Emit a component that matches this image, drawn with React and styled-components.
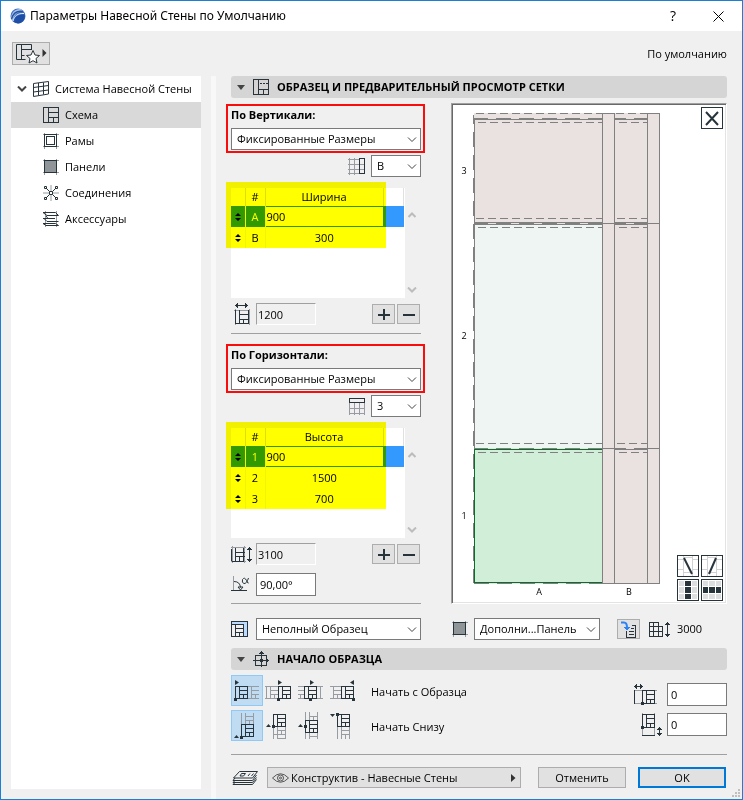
import * as React from "react";
import styled, { createGlobalStyle, css } from "styled-components";

const INK = "#27343c";
const PALE = "#969ca1";

const GlobalStyle = createGlobalStyle`
  * {
    box-sizing: border-box;
  }
  body {
    margin: 0;
    background: #f0f0f0;
  }
  body, button, input, select {
    font-family: "Open Sans", "Noto Sans", sans-serif;
    font-size: 11px;
    line-height: 16px;
    color: #000;
  }
  button, input, select {
    margin: 0;
    border-radius: 0;
    outline: none;
  }
`;

const Dialog = styled.div`
  display: flex;
  flex-direction: column;
  min-height: 100vh;
  border: 1px solid #1a80d6;
  background: #f0f0f0;
`;

const TitleBar = styled.header`
  display: flex;
  align-items: center;
  height: 30px;
  padding: 0 9px;
  background: #fff;
`;

const Title = styled.h1`
  flex: 1;
  margin: 0 0 0 4px;
  font-family: "Noto Sans", "Open Sans", sans-serif;
  font-size: 12px;
  font-weight: 400;
`;

const TitleButton = styled.button`
  display: flex;
  align-items: center;
  justify-content: center;
  width: 30px;
  height: 24px;
  margin-left: 15px;
  padding: 0;
  border: 0;
  background: none;
  font-size: 14px;
`;

const TopStrip = styled.div`
  display: flex;
  align-items: center;
  justify-content: space-between;
  height: 45px;
  padding: 0 15px 0 11px;
`;

const FlatButton = styled.button`
  display: flex;
  align-items: center;
  justify-content: center;
  width: ${(p) => p.$w || 23}px;
  height: ${(p) => p.$h || 20}px;
  padding: 0;
  border: 1px solid #adadad;
  background: #e1e1e1;
`;

const Body = styled.div`
  display: flex;
  flex: 1;
`;

const Sidebar = styled.nav`
  width: 190px;
  margin: 0 10px 10px;
  background: #fff;
`;

const NavItem = styled.a`
  display: flex;
  align-items: center;
  gap: 6px;
  height: 26px;
  padding-left: ${(p) => (p.$root ? 6 : 32)}px;
  background: ${(p) => (p.$active ? "#d9d9d9" : "none")};
  color: #000;
  text-decoration: none;
  white-space: nowrap;
`;

const Splitter = styled.div`
  width: 5px;
  background: #f8f8f8;
`;

const Content = styled.main`
  display: flex;
  flex: 1;
  flex-direction: column;
  min-width: 0;
  padding: 0 15px 10px;
`;

const SectionHead = styled.h2`
  display: flex;
  align-items: center;
  gap: 8px;
  height: 22px;
  margin: ${(p) => p.$top || 0}px 0 0;
  padding-left: 5px;
  border-radius: 3px;
  background: #d5d5d5;
  font-size: 11px;
  font-weight: 700;
`;

const Columns = styled.div`
  display: flex;
  gap: 30px;
  padding-top: 5px;
`;

const Settings = styled.div`
  display: flex;
  flex-direction: column;
  width: 190px;
  padding-top: 4px;
`;

const Marked = styled.div`
  position: relative;
  display: flex;
  flex-direction: column;
  gap: 5px;

  &::after {
    content: "";
    position: absolute;
    inset: -3px -4px -3px -5px;
    border: 2px solid #f80c0c;
    pointer-events: none;
  }
`;

const GroupLabel = styled.label`
  font-weight: 700;
`;

const SelectBox = styled.div`
  position: relative;
  display: flex;
  width: ${(p) => (p.$w ? `${p.$w}px` : "auto")};

  svg {
    position: absolute;
    top: 9px;
    right: 4px;
    pointer-events: none;
  }
`;

const NativeSelect = styled.select`
  flex: 1;
  width: 100%;
  height: 22px;
  padding: 0 16px 0 5px;
  border: 1px solid #7a7a7a;
  background: #fff;
  appearance: none;
`;

const PickRow = styled.div`
  display: flex;
  align-items: center;
  justify-content: flex-end;
  gap: 6px;
  margin-top: 5px;
`;

const TableArea = styled.div`
  position: relative;
  display: flex;
  gap: 2px;
  height: 110px;
  margin-top: 11px;

  &::after {
    content: "";
    position: absolute;
    top: -6px;
    left: -5px;
    width: 160px;
    height: ${(p) => 24 + p.$rows * 21}px;
    background: #ff0;
    mix-blend-mode: multiply;
    pointer-events: none;
  }
`;

const TablePane = styled.div`
  width: 174px;
  background: #fff;
`;

const SizeTable = styled.table`
  width: 173px;
  border-collapse: collapse;
  table-layout: fixed;
  text-align: center;

  th {
    height: 18px;
    padding: 0;
    border-right: 1px solid #e0e0e0;
    font-weight: 400;
  }
  td {
    height: 21px;
    padding: 0;
    border-right: 1px solid #f4f4f4;
  }
  td:last-child,
  td:nth-child(3) {
    border-right: 0;
  }
`;

const HandleCol = styled.col`
  width: 14px;
`;

const NameCol = styled.col`
  width: 20px;
`;

const SizeCol = styled.col`
  width: 118px;
`;

const SizeRow = styled.tr`
  ${(p) =>
    p.$selected &&
    css`
      background: #3399ff;
      color: #fff;
    `}
  svg {
    display: block;
    margin: 0 auto;
  }
`;

const CellInput = styled.input`
  display: block;
  width: 100%;
  height: 19px;
  padding: 0 1px;
  border: 0;
  background: #fff;
`;

const ScrollArrows = styled.div`
  display: flex;
  flex-direction: column;
  justify-content: space-between;
  padding: 24px 0 5px;
`;

const FieldRow = styled.div`
  display: flex;
  align-items: center;
  height: ${(p) => p.$h || 22}px;
  margin-top: ${(p) => p.$top || 5}px;
`;

const IconSlot = styled.label`
  display: flex;
  width: 25px;
`;

const TextInput = styled.input`
  width: 60px;
  height: 23px;
  padding: 0 3px;
  border: 1px solid #7a7a7a;
  background: #fff;
`;

const TotalInput = styled.input`
  width: 60px;
  height: 22px;
  padding: 0 1px;
  border: 1px solid;
  border-color: #a0a0a0 #fff #fff #a0a0a0;
  background: #f0f0f0;
`;

const StepButtons = styled.div`
  display: flex;
  gap: 2px;
  margin: 0 1px 0 auto;
`;

const Rule = styled.hr`
  width: 100%;
  height: 1px;
  margin: ${(p) => p.$m};
  border: 0;
  background: #a0a0a0;
`;

const Preview = styled.div`
  position: relative;
  flex: 1;
  border: 1px solid;
  border-color: #a0a0a0 #fff #fff #a0a0a0;
  background: #fff;
  box-shadow: inset 1px 1px #696969, inset -1px -1px #e3e3e3;

  > svg {
    display: block;
    margin: 1px;
  }
`;

const CanvasTools = styled.div`
  position: absolute;
  right: 3px;
  ${(p) => (p.$top ? "top: 3px;" : "bottom: 2px;")}
  display: grid;
  grid-template-columns: repeat(${(p) => (p.$top ? 1 : 2)}, 22px);
  gap: 2px;
`;

const CanvasButton = styled.button`
  display: flex;
  height: 22px;
  padding: 0;
  border: 1px solid ${INK};
  background: #fff;
`;

const PatternRow = styled.div`
  display: flex;
  align-items: center;
  margin-top: 14px;
`;

const PanelPick = styled.div`
  display: flex;
  align-items: center;
  gap: 6px;
  margin: 0 17px 0 31px;
`;

const Height = styled.span`
  display: flex;
  align-items: center;
  gap: 6px;
  margin-left: 9px;
`;

const OriginArea = styled.div`
  display: flex;
  justify-content: space-between;
  padding-top: 5px;
`;

const OriginRows = styled.div`
  display: grid;
  gap: 4px;
`;

const OriginRow = styled.div`
  display: flex;
  align-items: center;
`;

const OriginText = styled.span`
  margin-left: 12px;
  padding-top: 2px;
`;

const OriginButton = styled.button`
  display: flex;
  width: 32px;
  height: 31px;
  padding: 0;
  border: 0;
  background: ${(p) => (p.$on ? "#c0dcf3" : "none")};
  box-shadow: ${(p) => (p.$on ? "inset 0 0 0 1px #90c8f6" : "none")};
`;

const Offsets = styled.div`
  display: grid;
  gap: 7px;
  align-content: start;
  padding-top: 8px;
`;

const OffsetField = styled.label`
  display: flex;
  align-items: center;
  gap: 4px;
  height: 23px;
`;

const Footer = styled.footer`
  display: flex;
  align-items: center;
  gap: 12px;
  padding-right: 1px;
`;

const FooterButton = styled.button`
  width: 88px;
  height: 21px;
  padding: 0;
  border: ${(p) => (p.$primary ? "2px solid #0078d7" : "1px solid #adadad")};
  background: #e1e1e1;
  line-height: 17px;
`;

const LayerButton = styled.button`
  display: flex;
  flex: 1;
  align-items: center;
  gap: 2px;
  height: 21px;
  margin-right: 5px;
  margin-left: -4px;
  padding: 0 4px;
  border: 1px solid #adadad;
  background: #e1e1e1;

  svg:last-child {
    margin-left: auto;
  }
`;

const Grip = styled.svg`
  position: fixed;
  right: 3px;
  bottom: 3px;
`;

const IconSvg = styled.svg`
  flex: none;
`;

/* icons */

const Icon = ({ w = 16, h = w, dark, pale, fill, children }) => (
  <IconSvg width={w} height={h} viewBox={`0 0 ${w} ${h}`} fill="none" shapeRendering="crispEdges" aria-hidden="true">
    {pale && <path d={pale} stroke={PALE} />}
    {dark && <path d={dark} stroke={INK} />}
    {fill && <path d={fill} fill={INK} />}
    {children}
  </IconSvg>
);

const Chevron = ({ color = "#444", up, w = 1 }) => (
  <svg width="10" height="6" viewBox="0 0 10 6" fill="none" stroke={color} strokeWidth={w} aria-hidden="true">
    <path d={up ? "M1.5 5L5 1.5L8.5 5" : "M1 .5L5 4.5L9 .5"} />
  </svg>
);

const Logo = () => (
  <svg width="16" height="16" viewBox="0 0 16 16" aria-hidden="true">
    <circle cx="8" cy="8" r="7.5" fill="#3f6fc4" />
    <path d="M1 11C1 4 6 .5 11 1.2L14 3.5C8 3 4 6 2.5 13Z" fill="#a9c3ea" />
    <path d="M4 14C4 9 8 6 14.5 6.5C16 11 12 15.5 8 15.5Z" fill="#1f4ea6" />
    <path d="M1.5 11C3 5.5 7 2.5 13 3.5" stroke="#28549f" strokeWidth="1.5" fill="none" />
    <path d="M3 13C4 8 8 5 14 5.5" stroke="#e7f0fc" fill="none" />
  </svg>
);

const SchemeIcon = () => <Icon dark="M.5 .5h15v15h-15zM5.5 .5v15M5.5 5.5h10M5.5 10.5h10M10.5 10.5v5" />;

const SystemIcon = () => (
  <svg width="16" height="16" viewBox="0 0 16 16" fill="none" stroke={INK} aria-hidden="true">
    <path d="M.5 2.5L15.5 .5V13L.5 15.5zM5.5 2v12.5M10.5 1.5v12M.5 6.5L15.5 4.5M.5 11L15.5 9" />
  </svg>
);

const FramesIcon = () => (
  <Icon pale="M1.5 0v16M13.5 0v16M0 1.5h16M0 13.5h16">
    <path d="M1.5 1.5h12v12h-12z" fill="#fff" stroke={INK} />
    <path d="M3.5 3.5h8v8h-8z" stroke={INK} />
  </Icon>
);

const PanelIcon = () => (
  <Icon pale="M1.5 0v16M13.5 0v16M0 1.5h16M0 13.5h16">
    <path d="M1.5 1.5h12v12h-12z" fill="#8f9599" stroke={INK} />
  </Icon>
);

const JointsIcon = () => (
  <svg width="16" height="16" viewBox="0 0 16 16" fill="none" stroke={INK} aria-hidden="true">
    <path d="M8 0v6M8 10v6M0 8h6M10 8h6" stroke={PALE} />
    <path d="M3 3l3.5 3.5M13 3L9.5 6.5M3 13l3.5-3.5M13 13L9.5 9.5M6.5 6.5h3v3h-3z" />
    <path d="M1.5 1.5h2v2h-2zM12.5 1.5h2v2h-2zM1.5 12.5h2v2h-2zM12.5 12.5h2v2h-2z" />
  </svg>
);

const AccessoriesIcon = () => (
  <svg width="16" height="16" viewBox="0 0 16 16" fill="none" stroke={INK} aria-hidden="true">
    <path d="M2.5 0v16M13.5 0v16" stroke={PALE} />
    <path d="M0 1.5h12.5L15.5 4.5H4zM0 7.5h12M3 5l2 2.5M15.5 10.5H4L1 7.5M0 12.5h12.5l3 2H3z" />
  </svg>
);

const GridIcon = ({ row }) => (
  <Icon
    w={17}
    pale={
      row
        ? "M1.5 5v12M6.5 5v12M11.5 5v12M16.5 5v12M1 10.5h16M1 15.5h16"
        : "M1.5 0v17M6.5 0v17M0 1.5h12M0 6.5h16M0 11.5h16M0 15.5h12"
    }
    dark={row ? "M1.5 .5h15v4h-15z" : "M11.5 .5h5v15h-5z"}
  />
);

const SpanIcon = ({ tall }) =>
  tall ? (
    <Icon
      w={22}
      h={17}
      pale="M0 1.5h15M0 15.5h15M1.5 0v17M13.5 0v17"
      dark="M.5 2.5v12M4.5 2v13M4.5 6.5h9M4.5 10.5h9M8.5 10.5v5M1 15.5h12M12.5 2v13M18.5 3v11"
      fill="M18 1h1v1h1v1h1v1h-5v-1h1v-1h1zM16 13h5v1h-1v1h-1v1h-1v-1h-1v-1h-1z"
    />
  ) : (
    <Icon
      w={22}
      pale="M3 7.5h16M18.5 6v16M4.5 6v16"
      dark="M4.5 7v13.5h13M8.5 7v13M17.5 7v13M8.5 11.5h9M8.5 16.5h9M12.5 16.5v4M5 2.5h11"
      fill="M4 2h1v-1h1v-1h1v5h-1v-1h-1v-1h-1zM14 0h1v1h1v1h1v1h-1v1h-1v1h-1z"
    />
  );

const AngleIcon = () => (
  <svg width="19" height="17" viewBox="0 0 19 17" fill="none" stroke={INK} aria-hidden="true">
    <path d="M2.5 0v15" stroke={PALE} />
    <path d="M0 14.5h16M3 5.5q6 0 6.5 6M7 11h5l-2.5 3z" />
    <path d="M17.5 2q-2 6-4.5 5.5t-1.5-4q2-3 4 1t2 2.5" />
  </svg>
);

/* one mullion module; the pale lines are the modules that continue it */
const moduleLines = (x, y) =>
  `M${x}.5 ${y}.5h12v12h-12zM${x + 4}.5 ${y}.5v12M${x + 4}.5 ${y + 4}.5h8M${x + 4}.5 ${y + 8}.5h8M${x + 8}.5 ${y + 8}.5v4`;

const ORIGINS = {
  across: [
    { x: 4, pale: "M16 11.5h12M16 23.5h12M20.5 11v13M20 15.5h8M20 19.5h8M24.5 19v5", dot: [3, 23], tri: "M4 5l4 2.5L4 10z" },
    { x: 15, pale: "M2 11.5h13M2 23.5h13M3.5 11v13M7.5 11v13M7 15.5h8M7 19.5h8M11.5 19v5", dot: [14, 23], tri: "M15 5l4 2.5L15 10z" },
    { x: 9, pale: "M3 11.5h6M3 23.5h6M3 15.5h6M3 19.5h6M5.5 19v5M22 11.5h6M22 23.5h6M25.5 11v13", dot: [14, 23], tri: "M15 5l4 2.5L15 10z" },
    { x: 14, pale: "M3 11.5h11M3 23.5h11M6.5 11v13M6 15.5h8M6 19.5h8M10.5 19v5", dot: [25, 23], tri: "M27 5l-4 2.5L27 10z" },
  ],
  upward: [
    { y: 14, pale: "M10.5 3v11M14.5 3v11M22.5 3v11M14 6.5h8M14 10.5h8M18.5 10v4", dot: [9, 26], tri: "M3 28l2.5-3L8 28z" },
    { y: 4, pale: "M10.5 16v13M14.5 16v13M22.5 16v13M14 20.5h8M10 24.5h12M18.5 20v4M14 28.5h8", dot: [9, 15], tri: "M3 17l2.5-3L8 17z" },
    { y: 10, pale: "M10.5 22v7M14.5 2v8M14.5 22v7M22.5 2v8M22.5 22v7M10.5 2v8M14 6.5h8M18.5 6v4M14 26.5h8", dot: [9, 15], tri: "M3 17l2.5-3L8 17z" },
    { y: 4, pale: "M10.5 16v13M14.5 16v13M22.5 16v13M14 20.5h8M14 24.5h8M18.5 24v5", dot: [9, 3], tri: "M3 4l2.5 3L8 4z" },
  ],
};

const OriginIcon = ({ x = 10, y = 11, pale, dot, tri }) => (
  <Icon w={32} h={31} pale={pale} dark={moduleLines(x, y)}>
    <path d={`M${dot[0]} ${dot[1]}h3v3h-3z`} fill={INK} />
    <path d={tri} fill={INK} shapeRendering="auto" />
  </Icon>
);

const dashX = { stroke: "#808080", strokeDasharray: "8 4" };

const GridPreview = () => (
  <svg width="270" height="497" viewBox="453 105 270 497" fill="none" shapeRendering="crispEdges" role="img" aria-label="Сетка">
    <path d="M474 113h186v471H474z" fill="#eae1e1" />
    <path d="M475 225h127v223H475z" fill="#eff5f2" />
    <path d="M473.5 115v468" stroke="#808080" strokeDasharray="15 8" strokeDashoffset="6" />
    <path d="M474.5 118v465M602.5 113v471M614.5 113v471M647.5 113v471M659.5 113v471" stroke="#808080" />
    <path d="M602 113.5h12M647 113.5h13M602 583.5h58M602 223.5h58M602 448.5h58" stroke="#808080" />
    <path d="M476 113.5h126M616 113.5h31" {...dashX} />
    {[119, 223.5, 448.5].map((y, i) => (
      <React.Fragment key={y}>
        <path d={`M474 ${y}h128M614 ${y}h33`} stroke="#808080" strokeWidth={i === 1 ? 3 : 2} />
        <path d={`M488 ${i ? y : 118.5}h114M626 ${i ? y : 118.5}h9`} stroke="#eae1e1" strokeDasharray="8 15" />
      </React.Fragment>
    ))}
    <path d="M478 122.5h124M619 122.5h28M478 227.5h124M619 227.5h28" {...dashX} />
    <path d="M476 218.5h126M617 218.5h30M476 443.5h126M617 443.5h30" {...dashX} />
    <path d="M619 452.5h28" {...dashX} />
    <path d="M474.5 449.5h128v133h-128z" fill="#d1efd8" stroke="#0d6b2b" />
    <path d="M478 452.5h124" {...dashX} />
    <path d="M474 583.5h128" stroke="#808080" strokeDasharray="15 8" />
    <path d="M602.5 449v134" stroke="#808080" />
    <g fill="#000" fontSize="9" textAnchor="middle" shapeRendering="auto">
      <text x="464" y="174">3</text>
      <text x="464" y="339">2</text>
      <text x="464" y="519">1</text>
      <text x="539" y="595">A</text>
      <text x="629" y="595">B</text>
    </g>
  </svg>
);

const LineTool = ({ d }) => (
  <svg width="20" height="20" viewBox="0 0 20 20" fill="none" aria-hidden="true">
    <path d="M5.5 0v20M14.5 0v20M0 3.5h5M0 13.5h5M5 1.5h10M5 16.5h10M15 3.5h5M15 13.5h5" stroke="#d0d3d5" />
    <path d={d} stroke={INK} strokeWidth="2" />
  </svg>
);

const CELL_STARTS = [1, 7, 14];
const CELL_SIZES = [5, 6, 5];

const CellTool = ({ column }) => (
  <svg width="20" height="20" viewBox="0 0 20 20" aria-hidden="true">
    {[0, 1, 2].map((r) =>
      [0, 1, 2].map((c) => (
        <rect
          key={`${r}${c}`}
          x={CELL_STARTS[c]}
          y={CELL_STARTS[r]}
          width={CELL_SIZES[c]}
          height={CELL_SIZES[r]}
          fill={(column ? c : r) === 1 ? INK : "#dcdee0"}
        />
      ))
    )}
  </svg>
);

const Select = ({ id, label, value, w }) => (
  <SelectBox $w={w}>
    <NativeSelect id={id} aria-label={label} defaultValue={value}>
      <option>{value}</option>
    </NativeSelect>
    <Chevron />
  </SelectBox>
);

const SizePanel = ({ id, title, value, pick, heading, rows, total, tall }) => (
  <>
    <Marked>
      <GroupLabel htmlFor={id}>{title}</GroupLabel>
      <Select id={id} value={value} />
    </Marked>
    <PickRow>
      <GridIcon row={tall} />
      <Select label={heading} value={pick} w={50} />
    </PickRow>
    <TableArea $rows={rows.length}>
      <TablePane>
        <SizeTable>
          <colgroup>
            <HandleCol />
            <NameCol />
            <SizeCol />
            <col />
          </colgroup>
          <thead>
            <tr>
              <th />
              <th>#</th>
              <th>{heading}</th>
              <th />
            </tr>
          </thead>
          <tbody>
            {rows.map(([name, size], i) => (
              <SizeRow key={name} $selected={i === 0}>
                <td>
                  <svg width="6" height="8" viewBox="0 0 6 8" aria-hidden="true">
                    <path d="M0 3l3-3 3 3zM0 5l3 3 3-3z" />
                  </svg>
                </td>
                <td>{name}</td>
                <td>{i === 0 ? <CellInput aria-label={`${heading} ${name}`} defaultValue={size} /> : size}</td>
                <td />
              </SizeRow>
            ))}
          </tbody>
        </SizeTable>
      </TablePane>
      <ScrollArrows>
        <Chevron up color="#bcbcbc" w={2} />
        <Chevron color="#bcbcbc" w={2} />
      </ScrollArrows>
    </TableArea>
    <FieldRow>
      <IconSlot htmlFor={`${id}-total`} aria-label="Итого">
        <SpanIcon tall={tall} />
      </IconSlot>
      <TotalInput id={`${id}-total`} defaultValue={total} readOnly />
      <StepButtons>
        <FlatButton aria-label="Добавить">
          <Icon w={13} fill="M6 1h2v11h-2zM1 6h12v2h-12z" />
        </FlatButton>
        <FlatButton aria-label="Удалить">
          <Icon w={13} fill="M1 6h12v2h-12z" />
        </FlatButton>
      </StepButtons>
    </FieldRow>
  </>
);

const NAV = [
  ["Схема", SchemeIcon],
  ["Рамы", FramesIcon],
  ["Панели", PanelIcon],
  ["Соединения", JointsIcon],
  ["Аксессуары", AccessoriesIcon],
];

const Caret = () => (
  <svg width="9" height="5" viewBox="0 0 9 5" aria-hidden="true">
    <path d="M1 0h8L5 5z" fill="#444" />
  </svg>
);

const RightCaret = () => (
  <svg width="5" height="8" viewBox="0 0 5 8" aria-hidden="true">
    <path d="M0 0l4.5 4L0 8z" fill="#333" />
  </svg>
);

const App = () => (
  <Dialog>
    <GlobalStyle />
    <TitleBar>
      <Logo />
      <Title>Параметры Навесной Стены по Умолчанию</Title>
      <TitleButton>?</TitleButton>
      <TitleButton aria-label="Закрыть">
        <svg width="11" height="11" viewBox="0 0 11 11" stroke="#000" aria-hidden="true">
          <path d="M.5 .5l10 10M10.5 .5l-10 10" />
        </svg>
      </TitleButton>
    </TitleBar>

    <TopStrip>
      <FlatButton $w={38} $h={23} aria-label="Избранное">
        <svg width="32" height="21" viewBox="0 0 32 21" fill="none" stroke={INK} aria-hidden="true">
          <path d="M16.5 7V1.5h-15v15h9M6.5 1.5v15M6.5 6.5h10M6.5 12.5h3" />
          <path d="M18 7.5l2 4.5 4.500.5-3.500 3 1 4.500-4-2.300-4 2.300 1-4.500-3.500-3 4.500-.5z" fill="#fff" />
          <path d="M27.5 6l4 4-4 4z" fill="#333" stroke="none" />
        </svg>
      </FlatButton>
      <span>По умолчанию</span>
    </TopStrip>

    <Body>
      <Sidebar>
        <NavItem href="#system" $root>
          <Chevron color="#444" w={2} />
          <SystemIcon />
          Система Навесной Стены
        </NavItem>
        {NAV.map(([name, Glyph], i) => (
          <NavItem key={name} href={`#${i}`} $active={i === 0}>
            <Glyph />
            {name}
          </NavItem>
        ))}
      </Sidebar>
      <Splitter />

      <Content>
        <SectionHead>
          <Caret />
          <Icon dark="M.5 .5h15v15h-15zM5.5 .5v15M5.5 10.5h10M10.5 10.5v5M7 4.5h2M10 4.5h2M13 4.5h2" />
          ОБРАЗЕЦ И ПРЕДВАРИТЕЛЬНЫЙ ПРОСМОТР СЕТКИ
        </SectionHead>

        <Columns>
          <Settings>
            <SizePanel
              id="vertical"
              title="По Вертикали:"
              value="Фиксированные Размеры"
              pick="B"
              heading="Ширина"
              rows={[["A", 900], ["B", 300]]}
              total="1200"
            />
            <Rule $m="8px 0 13px" />
            <SizePanel
              id="horizontal"
              title="По Горизонтали:"
              value="Фиксированные Размеры"
              pick="3"
              heading="Высота"
              rows={[["1", 900], ["2", 1500], ["3", 700]]}
              total="3100"
              tall
            />
            <FieldRow $h={23} $top={8}>
              <IconSlot htmlFor="angle" aria-label="Угол">
                <AngleIcon />
              </IconSlot>
              <TextInput id="angle" defaultValue="90,00°" />
            </FieldRow>
            <Rule $m="7px 0 0" />
          </Settings>

          <Preview>
            <GridPreview />
            <CanvasTools $top>
              <CanvasButton aria-label="Закрыть просмотр">
                <svg width="20" height="20" viewBox="0 0 20 20" stroke={INK} strokeWidth="2" aria-hidden="true">
                  <path d="M4 4l12 13M16 4L4 17" />
                </svg>
              </CanvasButton>
            </CanvasTools>
            <CanvasTools>
              <CanvasButton aria-label="Линия влево">
                <LineTool d="M6 2l8 16" />
              </CanvasButton>
              <CanvasButton aria-label="Линия вправо">
                <LineTool d="M14 2L7 18" />
              </CanvasButton>
              <CanvasButton aria-label="Столбец">
                <CellTool column />
              </CanvasButton>
              <CanvasButton aria-label="Строка">
                <CellTool />
              </CanvasButton>
            </CanvasTools>
          </Preview>
        </Columns>

        <PatternRow>
          <IconSlot as="span">
            <Icon w={17}>
              <path d="M0 0h17v16h-5V4H0z" fill="#bcdcff" />
              <path d="M.5 16V.5h16v15h-4M0 15.5h13M.5 3.5h12v12M4.5 3.5v12M4.5 7.5h8M4.5 11.5h8M8.5 11.5v4" stroke={INK} />
            </Icon>
          </IconSlot>
          <Select label="Образец" value="Неполный Образец" w={165} />
          <PanelPick>
            <PanelIcon />
            <Select label="Панель" value="Дополни...Панель" w={126} />
          </PanelPick>
          <FlatButton aria-label="Применить">
            <Icon w={17} dark="M6.5 10v6h9V4.5h-4M11 7.5h3M9 10.5h5M9 13.5h5">
              <path d="M1 1.5h3q3 0 3 5" stroke="#2b82f6" strokeWidth="2" shapeRendering="auto" />
              <path d="M3 5.5h8L7 9.5z" fill="#2b82f6" />
            </Icon>
          </FlatButton>
          <Height>
            <Icon
              w={22}
              h={17}
              dark="M.5 1.5h9v14h-9zM4.5 1v15M0 5.5h13.5v10H9M0 10.5h14M18.5 3v11"
              fill="M18 1h1v1h1v1h1v1h-5v-1h1v-1h1zM16 13h5v1h-1v1h-1v1h-1v-1h-1v-1h-1z"
            />
            3000
          </Height>
        </PatternRow>

        <SectionHead $top={8}>
          <Caret />
          <Icon
            dark="M2.5 4.5h11v10h-11zM8.5 2v14M0 9.5h15"
            fill="M8 0h1v1h1v1h1v1h-5v-1h1v-1h1zM13 7h1v1h1v1h1v1h-1v1h-1v1h-1zM7 8h3v3h-3z"
          />
          НАЧАЛО ОБРАЗЦА
        </SectionHead>

        <OriginArea>
          <OriginRows>
            {[["across", "Начать с Образца"], ["upward", "Начать Снизу"]].map(([key, text]) => (
              <OriginRow key={key}>
                {ORIGINS[key].map((origin, i) => (
                  <OriginButton key={i} $on={i === 0} aria-label={`${text} ${i + 1}`}>
                    <OriginIcon {...origin} />
                  </OriginButton>
                ))}
                <OriginText>{text}</OriginText>
              </OriginRow>
            ))}
          </OriginRows>
          <Offsets>
            <OffsetField>
              <Icon
                w={29}
                h={23}
                pale="M0 7.5h23M0 20.5h23"
                dark="M.5 7v14M8.5 7.5h12v13h-12zM12.5 7v13M12.5 11.5h8M12.5 16.5h8M16.5 16v4M2 3.5h6"
                fill="M0 3h1v-1h1v-1h1v5h-1v-1h-1v-1h-1zM6 1h1v1h1v1h1v1h-1v1h-1v1h-1zM7 19h3v3h-3z"
              />
              <TextInput aria-label="Смещение по горизонтали" defaultValue="0" />
            </OffsetField>
            <OffsetField>
              <Icon
                w={29}
                h={23}
                pale="M8.5 0v23M20.5 0v23"
                dark="M8.5 1.5h12v13h-12zM12.5 1v13M12.5 5.5h8M12.5 10.5h8M16.5 10v4M8 22.5h13M25.5 16v5"
                fill="M25 14h1v1h1v1h1v1h-5v-1h1v-1h1zM23 20h5v1h-1v1h-1v1h-1v-1h-1v-1h-1zM7 13h3v3h-3z"
              />
              <TextInput aria-label="Смещение по вертикали" defaultValue="0" />
            </OffsetField>
          </Offsets>
        </OriginArea>

        <Rule $m="13px 0 12px" />

        <Footer>
          <svg width="28" height="16" viewBox="0 0 28 16" fill="none" stroke={INK} aria-hidden="true">
            <path d="M8.5 1.5H26.5L21.5 8H2.5zM25.5 5L21.5 10.5H2L4 8M25.5 7.500L21.5 12.500H2L4 10.500M25.500 9.500L21.5 14.500H2L4 12.500M10.5 3.500h4l-2 2.500H9zM17 6l2-2.500M20.500 6l2-2.500" />
          </svg>
          <LayerButton>
            <svg width="17" height="12" viewBox="0 0 17 12" fill="none" stroke="#555" aria-hidden="true">
              <path d="M.5 6Q8.5-2.5 16.5 6Q8.5 14.5 .5 6z" />
              <circle cx="8.5" cy="6" r="3" />
              <circle cx="8.5" cy="6" r="1" />
            </svg>
            Конструктив - Навесные Стены
            <RightCaret />
          </LayerButton>
          <FooterButton>Отменить</FooterButton>
          <FooterButton $primary>OK</FooterButton>
        </Footer>
      </Content>
    </Body>

    <Grip width="8" height="8" viewBox="0 0 8 8" fill="#bfbfbf" aria-hidden="true">
      <path d="M6 0h2v2h-2zM3 3h2v2h-2zM6 3h2v2h-2zM0 6h2v2h-2zM3 6h2v2h-2zM6 6h2v2h-2z" />
    </Grip>
  </Dialog>
);

export default App;
